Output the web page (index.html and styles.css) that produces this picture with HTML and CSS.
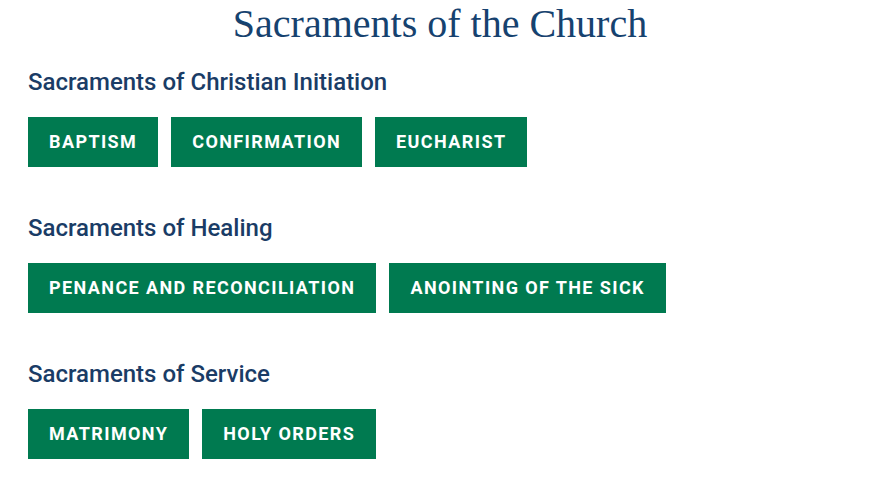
FILE: index.html
```html
<!DOCTYPE html>
<html lang="en">
<head>
    <meta charset="UTF-8">
    <meta name="viewport" content="width=device-width, initial-scale=1.0">
    <title>Sacraments of the Church</title>
    <link rel="stylesheet" href="styles.css">
</head>
<body>

    <h1 class="page-title">Sacraments of the Church</h1>

    <section class="group">
        <h2 class="group-title">Sacraments of Christian Initiation</h2>
        <div class="buttons">
            <a class="btn" href="#">Baptism</a>
            <a class="btn" href="#">Confirmation</a>
            <a class="btn" href="#">Eucharist</a>
        </div>
    </section>

    <section class="group">
        <h2 class="group-title">Sacraments of Healing</h2>
        <div class="buttons">
            <a class="btn" href="#">Penance and Reconciliation</a>
            <a class="btn" href="#">Anointing of the Sick</a>
        </div>
    </section>

    <section class="group">
        <h2 class="group-title">Sacraments of Service</h2>
        <div class="buttons">
            <a class="btn" href="#">Matrimony</a>
            <a class="btn" href="#">Holy Orders</a>
        </div>
    </section>

</body>
</html>
```

FILE: styles.css
```css
body {
    margin: 0;
    padding: 0 41px 0 28px;
    background-color: #fff;
    font-family: Roboto, "Liberation Sans", sans-serif;
}
.page-title {
    margin: 0 0 20px;
    text-align: center;
    font-family: "Liberation Serif", serif;
    font-weight: normal;
    font-size: 40px;
    line-height: 48px;
    color: #16426f;
}
.group {
    margin-bottom: 47px;
}
.group-title {
    margin: 0 0 21px;
    font-size: 24px;
    font-weight: 500;
    line-height: 28px;
    color: #1a3c66;
}
.buttons {
    display: flex;
    gap: 13px;
}
.btn {
    display: inline-block;
    height: 50px;
    line-height: 50px;
    padding: 0 21px;
    background-color: #007a50;
    color: #fff;
    font-size: 18px;
    font-weight: 700;
    letter-spacing: 1.4px;
    text-transform: uppercase;
    text-decoration: none;
}
.btn:hover {
    background-color: #00633f;
}
```
